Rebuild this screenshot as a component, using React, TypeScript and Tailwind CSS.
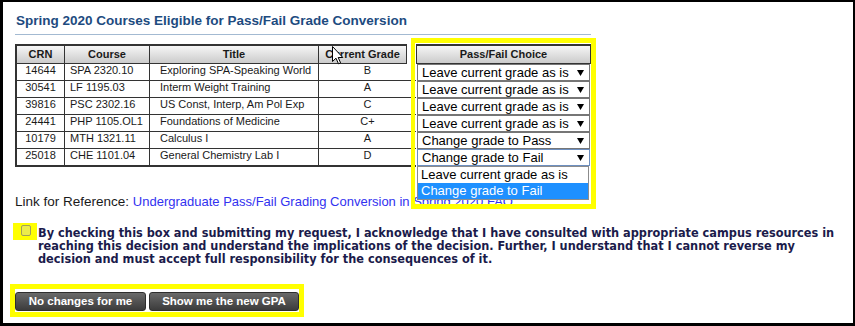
import React from "react";

const rows: string[][] = [
  ["14644", "SPA 2320.10", "Exploring SPA-Speaking World", "B", "Leave current grade as is"],
  ["30541", "LF 1195.03", "Interm Weight Training", "A", "Leave current grade as is"],
  ["39816", "PSC 2302.16", "US Const, Interp, Am Pol Exp", "C", "Leave current grade as is"],
  ["24441", "PHP 1105.OL1", "Foundations of Medicine", "C+", "Leave current grade as is"],
  ["10179", "MTH 1321.11", "Calculus I", "A", "Change grade to Pass"],
  ["25018", "CHE 1101.04", "General Chemistry Lab I", "D", "Change grade to Fail"],
];

function Arrow() {
  return (
    <svg width="7" height="6" viewBox="0 0 7 6" className="shrink-0">
      <polygon points="0,0 7,0 3.5,6" fill="#000" />
    </svg>
  );
}

function Select({ value, focused }: { value: string; focused?: boolean }) {
  return (
    <div
      className={
        "h-[17px] bg-white flex items-center justify-between pl-[4px] pr-[5px] text-[13px] leading-[15px] text-black border " +
        (focused ? "border-[#6d8fc0]" : "border-[#767676]")
      }
    >
      <span>{value}</span>
      <Arrow />
    </div>
  );
}

const hdr =
  "bg-gradient-to-b from-[#f6f6f6] to-[#cbcbcb] border-[#333] text-center font-bold text-[11px] leading-[17px] text-[#1a1a1a]";

export default function App() {
  return (
    <div className="relative w-[855px] h-[326px] overflow-hidden bg-white border-t-2 border-l-[3px] border-r-2 border-b-[3px] border-black font-['Liberation_Sans',Arial,sans-serif]">
      <div className="pl-[12px] pt-[11px]">
        <div className="w-[576px] border-b border-[#a3bad2] pb-[5px]">
          <div className="pl-[1px] text-[13.5px] font-bold leading-[16px] text-[#1d4b7f]">
            Spring 2020 Courses Eligible for Pass/Fail Grade Conversion
          </div>
        </div>

        <div className="mt-[9px] flex flex-col">
          <div className="flex h-[20px]">
            <div className={"w-[50px] border-l-2 border-t-2 border-r border-b " + hdr}>CRN</div>
            <div className={"w-[85px] border-t-2 border-r border-b " + hdr}>Course</div>
            <div className={"w-[169px] border-t-2 border-r border-b " + hdr}>Title</div>
            <div className={"w-[88px] border-t-2 border-r border-b " + hdr}>Current Grade</div>
            <div className="w-[9px]" />
            <div className={"w-[175px] border border-t-2 " + hdr}>Pass/Fail Choice</div>
          </div>
          {rows.map((r, i) => {
            const last = i === rows.length - 1;
            const b = last ? " border-b-2" : " border-b";
            const cell = "border-[#333] text-[11px] leading-[13px] text-[#1a1a1a] whitespace-nowrap";
            return (
              <div key={r[0]} className={"flex " + (last ? "h-[18px]" : "h-[17px]")}>
                <div className={"w-[50px] border-l-2 border-r text-center " + cell + b}>{r[0]}</div>
                <div className={"w-[85px] border-r pl-[5px] " + cell + b}>{r[1]}</div>
                <div className={"w-[169px] border-r pl-[10px] " + cell + b}>{r[2]}</div>
                <div className={"w-[97px] text-center " + cell + b}>{r[3]}</div>
                <div className="w-[175px] px-[1px]">
                  <Select value={r[4]} focused={last} />
                </div>
              </div>
            );
          })}
        </div>

        <div className="mt-[27px] text-[13px] leading-[16px] whitespace-nowrap">
          <span className="text-[#1a1a1a] text-[13.5px]">Link for Reference: </span>
          <span className="text-[#3232f0]">
            Undergraduate Pass/Fail Grading Conversion in Spring 2020 FAQ
          </span>
        </div>

        <div className="mt-[16px] flex items-start">
          <div className="-ml-[2px] -mt-[3px] w-[24px] h-[17px] bg-[#ffff00] pl-[8px] pt-[2px]">
            <div className="w-[10px] h-[11px] rounded-[2px] border border-[#a0a05a] bg-[#ecec4a]" />
          </div>
          <div className="ml-[1px] text-[12.6px] leading-[13px] font-bold text-[#1b1b4b] font-['DejaVu_Sans_Condensed','DejaVu_Sans',sans-serif] whitespace-nowrap">
            By checking this box and submitting my request, I acknowledge that I have consulted with appropriate campus resources in
            <br />
            reaching this decision and understand the implications of the decision. Further, I understand that I cannot reverse my
            <br />
            decision and must accept full responsibility for the consequences of it.
          </div>
        </div>

        <div className="mt-[19px] -ml-[5px] w-[294px] h-[33px] border-[5px] border-[#ffff00] pt-[3px]">
          <div className="flex gap-[3px]">
            {["No changes for me", "Show me the new GPA"].map((t, i) => (
              <div
                key={t}
                className={
                  "h-[19px] rounded-[3px] border border-[#2e2e2e] bg-gradient-to-b from-[#6a6a6a] to-[#3c3c3c] text-white font-bold text-[11.5px] leading-[17px] text-center " +
                  (i === 0 ? "w-[131px]" : "w-[150px]")
                }
              >
                {t}
              </div>
            ))}
          </div>
        </div>
      </div>

      {/* dropdown list overlay */}
      <div className="absolute left-[414px] top-[164px] w-[172px] border border-[#8c8c8c] bg-white text-[13px] leading-[16px]">
        <div className="h-[16px] pl-[3px] text-black">Leave current grade as is</div>
        <div className="h-[16px] pl-[3px] bg-[#1e90ff] text-white">Change grade to Fail</div>
      </div>

      {/* yellow highlight */}
      <div className="absolute left-[408px] top-[36px] w-[185px] h-[171px] border-[5px] border-l-[4px] border-[#ffff00]" />

      {/* mouse cursor */}
      <svg className="absolute left-[329px] top-[44px]" width="12" height="19" viewBox="0 0 12 19">
        <path d="M0.5 0.5 L0.5 15.5 L4 12.2 L6.5 17.8 L8.6 16.9 L6.2 11.5 L10.8 11.5 Z" fill="#fff" stroke="#000" strokeWidth="1" />
      </svg>
    </div>
  );
}
